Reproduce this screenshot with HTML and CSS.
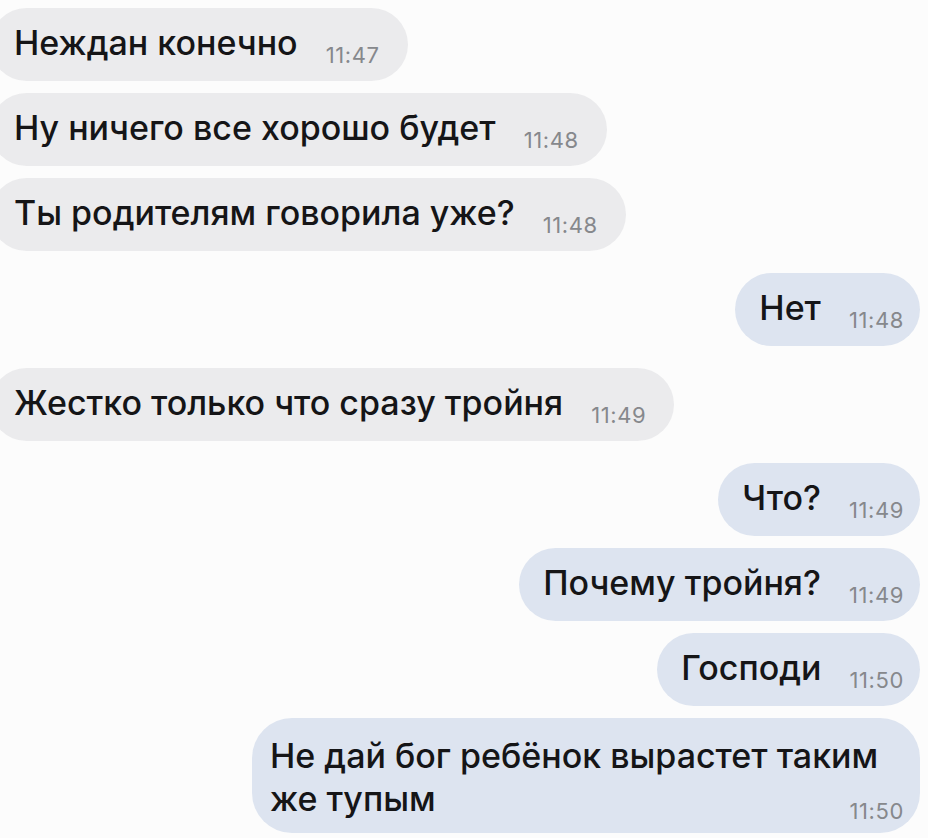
FILE: index.html
```html
<!DOCTYPE html>
<html lang="ru">
<head>
    <meta charset="UTF-8">
    <meta name="viewport" content="width=device-width, initial-scale=1.0">
    <title>Переписка</title>
    <link rel="stylesheet" href="styles.css">
</head>
<body>
    <div class="chat">
        <div class="msg in">
            <span class="text">Неждан конечно</span>
            <span class="time">11:47</span>
        </div>
        <div class="msg in">
            <span class="text">Ну ничего все хорошо будет</span>
            <span class="time">11:48</span>
        </div>
        <div class="msg in">
            <span class="text">Ты родителям говорила уже?</span>
            <span class="time">11:48</span>
        </div>

        <div class="msg out first">
            <span class="text">Нет</span>
            <span class="time">11:48</span>
        </div>

        <div class="msg in first">
            <span class="text">Жестко только что сразу тройня</span>
            <span class="time">11:49</span>
        </div>

        <div class="msg out first">
            <span class="text">Что?</span>
            <span class="time">11:49</span>
        </div>
        <div class="msg out">
            <span class="text">Почему тройня?</span>
            <span class="time">11:49</span>
        </div>
        <div class="msg out">
            <span class="text">Господи</span>
            <span class="time">11:50</span>
        </div>
        <div class="msg out long">
            <span class="text">Не дай бог ребёнок вырастет таким</span>
            <div class="last-line">
                <span class="text">же тупым</span>
                <span class="time">11:50</span>
            </div>
        </div>
    </div>
</body>
</html>
```

FILE: styles.css
```css
body {
    margin: 0;
    background: #fcfcfc;
    font-family: Inter, "Liberation Sans", sans-serif;
    color: #151517;
    overflow: hidden;
}
.chat {
    display: flex;
    flex-direction: column;
    gap: 12px;
    padding: 8px 8px 0 0;
}
.msg {
    display: flex;
    align-items: baseline;
    gap: 28px;
    height: 73px;
    box-sizing: border-box;
    padding: 0 23px 4px 24px;
    border-radius: 37px;
    line-height: 69px;
}
.msg.first {
    margin-top: 10px;
}
.in {
    align-self: flex-start;
    margin-left: -10px;
    background: #ebebed;
    padding-right: 28px;
}
.out {
    align-self: flex-end;
    background: #dde4f0;
    padding-right: 16px;
}
.text {
    font-size: 34px;
    font-weight: 500;
}
.time {
    font-size: 22px;
    letter-spacing: 0.6px;
    color: #86888c;
    position: relative;
    top: 8px;
}
.long {
    flex-direction: column;
    align-items: stretch;
    gap: 0;
    width: 668px;
    height: 115px;
    border-radius: 40px;
    padding: 16px 16px 0 18px;
    line-height: 43px;
}
.last-line {
    display: flex;
    align-items: baseline;
    justify-content: space-between;
}
```
